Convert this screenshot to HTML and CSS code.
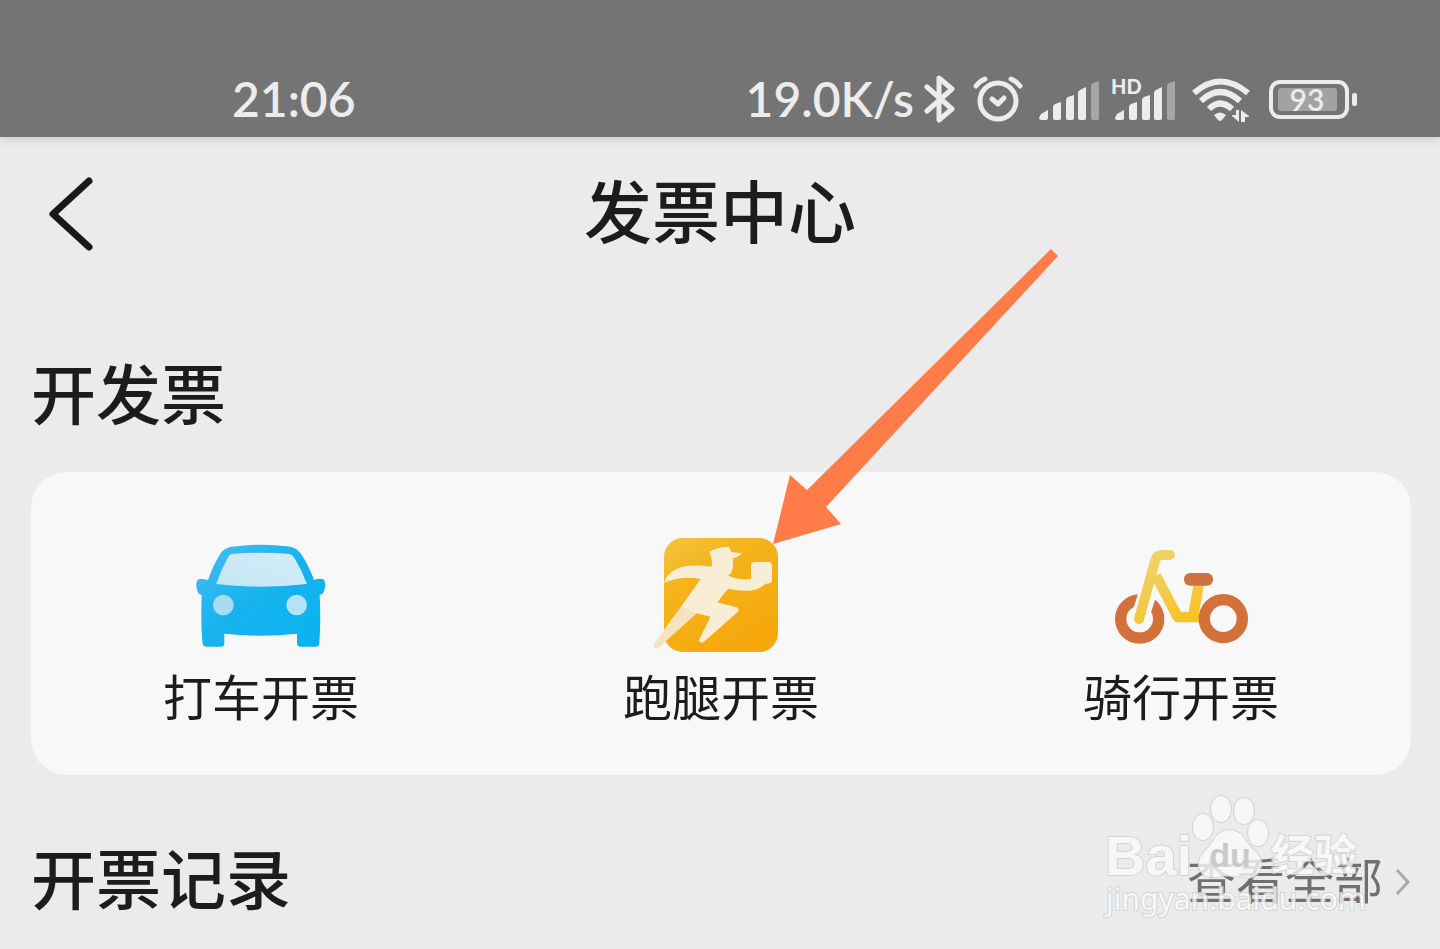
FILE: index.html
```html
<!DOCTYPE html>
<html lang="zh-CN">
<head>
    <meta charset="UTF-8">
    <meta name="viewport" content="width=device-width, initial-scale=1.0">
    <title>发票中心</title>
    <link rel="stylesheet" href="styles.css">
</head>
<body>
    <div class="status-bar">
        <span class="time">21:06</span>
        <div class="status-icons">
            <span class="speed">19.0K/s</span>
            <!-- Bluetooth -->
            <svg width="36" height="48" viewBox="0 0 36 48" fill="none" stroke="#ececec" stroke-width="5" stroke-linecap="round" stroke-linejoin="round">
                <path d="M3 12 L28 34 L15 45 V3 L28 14 L3 36"/>
            </svg>
            <!-- Alarm -->
            <svg width="53" height="48" viewBox="0 0 53 48" fill="none" stroke="#ececec" stroke-width="5" stroke-linecap="round" stroke-linejoin="round">
                <circle cx="25" cy="26" r="18"/>
                <path d="M19 24 L25 29 L31 23"/>
                <path d="M3 11 Q7 6 12 4 M38 4 Q43 6 47 11"/>
            </svg>
            <!-- Signal -->
            <svg width="60" height="48" viewBox="0 0 60 48" fill="#ececec">
                <path d="M2 39 L9 35 V43 Q9 45 7 45 H2 Q0 45 0 43 Z"/>
                <path d="M14 32 Q14 30 16 29 L22 27 V43 Q22 45 20 45 H16 Q14 45 14 43 Z"/>
                <path d="M27 25 Q27 23 29 22 L35 20 V43 Q35 45 33 45 H29 Q27 45 27 43 Z"/>
                <path d="M39 18 Q39 16 41 15 L47 12 V43 Q47 45 45 45 H41 Q39 45 39 43 Z"/>
                <path fill="#a6a6a6" d="M52 11 Q52 9 54 8 L60 6 V43 Q60 45 58 45 H54 Q52 45 52 43 Z"/>
            </svg>
            <!-- HD signal -->
            <svg width="66" height="48" viewBox="0 0 66 48" fill="#ececec">
                <text class="hd" x="-1" y="19">HD</text>
                <path d="M5 39 L12 35 V43 Q12 45 10 45 H5 Q3 45 3 43 Z"/>
                <path d="M17 32 Q17 30 19 29 L25 27 V43 Q25 45 23 45 H19 Q17 45 17 43 Z"/>
                <path d="M30 25 Q30 23 32 22 L38 20 V43 Q38 45 36 45 H32 Q30 45 30 43 Z"/>
                <path d="M42 18 Q42 16 44 15 L50 12 V43 Q50 45 48 45 H44 Q42 45 42 43 Z"/>
                <path fill="#a6a6a6" d="M55 11 Q55 9 57 8 L63 6 V43 Q63 45 61 45 H57 Q55 45 55 43 Z"/>
            </svg>
            <!-- Wi-Fi -->
            <svg width="65" height="48" viewBox="0 0 65 48" fill="none" stroke="#ececec" stroke-width="6">
                <path d="M3 18 Q29 -5 57 18"/>
                <path d="M10 26 Q29 8 49 26"/>
                <path d="M18 34 Q29 23 41 34"/>
                <path fill="#ececec" stroke="none" d="M23 40 Q29 35 35 40 L31 45 Q29 47 27 45 Z"/>
                <path fill="#ececec" stroke="none" d="M45 35 H48 V47 L41 41 V40 H45 Z M50 35 L58 41 V42 H54 V47 H50 Z"/>
            </svg>
            <!-- Battery -->
            <svg width="88" height="48" viewBox="0 0 88 48">
                <rect x="2" y="7" width="76" height="35" rx="9" fill="none" stroke="#ececec" stroke-width="4"/>
                <rect x="9" y="13" width="59" height="23" rx="3" fill="#a2a2a2"/>
                <rect x="83" y="18" width="5" height="13" rx="2" fill="#ececec"/>
                <text class="battery" x="38" y="36" text-anchor="middle">93</text>
            </svg>
        </div>
    </div>

    <header class="header">
        <button class="back" type="button" aria-label="返回">
            <svg width="46" height="76" viewBox="0 0 46 76" fill="none" stroke="#191919" stroke-width="7" stroke-linecap="round" stroke-linejoin="round">
                <path d="M41 5 L5 38 L41 71"/>
            </svg>
        </button>
        <h1>发票中心</h1>
    </header>

    <main class="container">
        <section>
            <h2>开发票</h2>
            <nav class="card">
                <a class="entry" href="#">
                    <span class="icon">
                        <svg width="130" height="114" viewBox="48 24 390 342">
                            <defs>
                                <linearGradient id="carBody" x1="0" y1="0" x2="1" y2="1">
                                    <stop offset="0" stop-color="#49bdf3"/>
                                    <stop offset="0.5" stop-color="#16b2ee"/>
                                    <stop offset="1" stop-color="#08b4f0"/>
                                </linearGradient>
                                <linearGradient id="carGlass" x1="1" y1="0" x2="0" y2="1">
                                    <stop offset="0" stop-color="#d5edf8"/>
                                    <stop offset="1" stop-color="#c4e6f6"/>
                                </linearGradient>
                            </defs>
                            <path fill="url(#carBody)" d="M155 50 Q245 38 332 50 Q350 54 362 70 Q386 106 402 150 L412 147 Q424 144 433 150 Q439 172 430 188 Q426 193 419 195 Q423 270 418 340 Q418 350 408 350 H360 Q351 350 351 340 V311 Q243 323 133 311 V340 Q133 350 124 350 H78 Q69 350 68 340 Q62 300 65 195 Q56 193 53 186 Q46 167 51 152 Q57 145 69 147 L84 150 Q100 103 124 67 Q136 53 155 50 Z"/>
                            <path fill="url(#carGlass)" d="M155 72 Q245 65 328 72 Q338 74 343 84 Q365 119 381 162 Q245 178 108 162 Q124 119 144 82 Q148 74 155 72 Z"/>
                            <circle cx="130" cy="225" r="31" fill="#a9dcf3"/>
                            <circle cx="350" cy="225" r="31" fill="#b4e2f6"/>
                        </svg>
                    </span>
                    <span class="label">打车开票</span>
                </a>
                <a class="entry" href="#">
                    <span class="icon">
                        <svg class="runner" width="114" height="114" viewBox="72 39 342 342">
                            <defs>
                                <linearGradient id="runBg" x1="0" y1="0" x2="0.6" y2="1">
                                    <stop offset="0" stop-color="#f5c343"/>
                                    <stop offset="0.35" stop-color="#f4b51b"/>
                                    <stop offset="1" stop-color="#f6a70c"/>
                                </linearGradient>
                            </defs>
                            <rect x="72" y="39" width="342" height="342" rx="56" fill="url(#runBg)"/>
                            <path fill="#f8edd5" d="M208 80 Q236 65 267 65 L275 82 L304 84 Q300 97 278 100 Q281 122 276 139 Q271 151 262 150 L275 156 Q300 166 333 161 V122 Q333 111 344 111 H386 Q396 111 396 122 V166 Q396 176 382 176 H376 Q358 194 328 197 Q297 199 264 191 L232 232 L290 247 Q300 251 293 261 L191 351 Q183 356 176 347 L211 275 L170 265 L53 370 Q44 372 39 362 Q68 319 114 258 L182 162 Q126 151 73 173 Q78 148 109 132 Q146 116 215 125 Q219 106 208 80 Z"/>
                            <path fill="#f1dcb5" opacity="0.65" d="M124 247 L170 265 L53 370 Q44 372 39 362 Q68 319 124 247 Z"/>
                        </svg>
                        <!-- Pointer to the errand entry -->
                        <svg class="arrow" width="285" height="295" viewBox="0 0 285 295">
                            <path fill="#ff7b47" d="M0 295 L17 226 L34 241 L278 0 L285 7 L53 258 L68 275 Z"/>
                        </svg>
                    </span>
                    <span class="label">跑腿开票</span>
                </a>
                <a class="entry" href="#">
                    <span class="icon">
                        <svg width="133" height="114" viewBox="42 9 399 342" fill="none">
                            <defs>
                                <linearGradient id="frame" gradientUnits="userSpaceOnUse" x1="170" y1="45" x2="270" y2="260">
                                    <stop offset="0" stop-color="#efd369"/>
                                    <stop offset="0.5" stop-color="#f3ca4d"/>
                                    <stop offset="1" stop-color="#f8c21c"/>
                                </linearGradient>
                            </defs>
                            <circle cx="116" cy="252" r="57" stroke="#d4713b" stroke-width="34"/>
                            <path d="M116 250 L160 112" stroke="#f8f8f8" stroke-width="54" stroke-linecap="round"/>
                            <path d="M165 122 L230 246 H295 M276 246 L293 150" stroke="url(#frame)" stroke-width="31" stroke-linejoin="round"/>
                            <path d="M114 252 L161 82 Q166 60 183 60 H207" stroke="url(#frame)" stroke-width="30" stroke-linecap="round" stroke-linejoin="round"/>
                            <rect x="249" y="114" width="87" height="38" rx="18" fill="#d0703e"/>
                            <circle cx="367" cy="251" r="57" fill="#f8f8f8" stroke="#d4713b" stroke-width="34"/>
                        </svg>
                    </span>
                    <span class="label">骑行开票</span>
                </a>
            </nav>
        </section>

        <section class="records">
            <h2>开票记录</h2>
            <a class="view-all" href="#">
                <span class="label">查看全部</span>
                <svg width="16" height="30" viewBox="0 0 16 30" fill="none" stroke="#a9a9a9" stroke-width="3">
                    <path d="M2 4 L13 16 L2 28"/>
                </svg>
            </a>
            <svg class="watermark" width="270" height="130" viewBox="0 0 270 130">
                <g class="mark">
                    <text class="mark-bai" x="2" y="82">Bai</text>
                    <ellipse cx="100" cy="34" rx="10" ry="13"/>
                    <ellipse cx="118" cy="16" rx="10" ry="13"/>
                    <ellipse cx="141" cy="18" rx="10" ry="13"/>
                    <ellipse cx="155" cy="40" rx="10" ry="13"/>
                    <path d="M126 37 Q135 37 141 45 Q145 52 153 59 Q161 68 157 77 Q152 87 141 84 Q126 81 114 84 Q102 86 97 77 Q93 68 101 59 Q108 52 112 45 Q118 37 126 37 Z"/>
                    <text class="mark-cn" x="168" y="78">经验</text>
                    <text class="mark-url" x="3" y="117">jingyan.baidu.com</text>
                </g>
                <text class="mark-du" x="127" y="74" text-anchor="middle">du</text>
            </svg>
        </section>
    </main>
</body>
</html>
```
FILE: styles.css
```css
* {
    box-sizing: border-box;
}
body {
    font-family: "Noto Sans CJK SC", sans-serif;
    margin: 0;
    background-color: #ebebeb;
    color: #1c1c1c;
}
h1, h2 {
    margin: 0;
    padding-bottom: 10px;
    font-weight: 500;
}
a {
    color: inherit;
    text-decoration: none;
}
.status-bar {
    display: flex;
    justify-content: space-between;
    align-items: center;
    padding: 75px 83px 14px 232px;
    background-color: #747474;
    color: #ececec;
    font-family: Lato, sans-serif;
    font-size: 48px;
    font-weight: 600;
    line-height: 48px;
    box-shadow: 0 2px 10px rgba(0, 0, 0, 0.15);
}
.status-icons {
    display: flex;
    align-items: center;
    gap: 13px;
}
.speed {
    margin-right: -3px;
}
.hd {
    font-size: 20px;
    font-weight: 900;
}
.battery {
    fill: #ececec;
    font-size: 30px;
    font-weight: 600;
}
.header {
    display: grid;
    grid-template-columns: 1fr auto 1fr;
    align-items: center;
    padding: 39px 48px 0;
}
.header h1 {
    font-size: 68px;
    line-height: 66px;
}
.back {
    justify-self: start;
    padding: 0;
    border: none;
    background: none;
    cursor: pointer;
}
.back svg {
    display: block;
}
.container {
    padding: 104px 29px 28px 31px;
}
h2 {
    font-size: 65px;
    line-height: 70px;
}
.card {
    display: grid;
    grid-template-columns: repeat(3, 1fr);
    margin-top: 36px;
    padding: 66px 0 41px;
    border-radius: 36px;
    background-color: #f8f8f8;
}
.entry {
    display: flex;
    flex-direction: column;
    align-items: center;
    gap: 10px;
}
.icon {
    position: relative;
    display: flex;
}
.runner {
    overflow: visible;
}
/* Tip sits on the corner of the icon */
.arrow {
    position: absolute;
    left: 109px;
    bottom: 108px;
    pointer-events: none;
}
.label {
    padding-bottom: 6px;
    font-size: 49px;
    line-height: 66px;
}
.records {
    position: relative;
    display: flex;
    justify-content: space-between;
    align-items: center;
    margin-top: 66px;
}
.view-all {
    display: flex;
    align-items: center;
    gap: 12px;
    color: #707070;
}
.watermark {
    position: absolute;
    right: 38px;
    top: -48px;
    pointer-events: none;
}
.mark {
    fill: #fafafa;
    stroke: #cfcfcf;
    stroke-width: 2px;
    paint-order: stroke;
    opacity: 0.8;
}
.mark-bai {
    font-family: "Liberation Sans", sans-serif;
    font-size: 56px;
    font-weight: 700;
}
.mark-cn {
    font-size: 43px;
    font-weight: 700;
}
.mark-url {
    font-family: "Noto Sans", sans-serif;
    font-size: 30px;
}
.mark-du {
    fill: #c9c9c9;
    font-family: "Liberation Sans", sans-serif;
    font-size: 34px;
    font-weight: 700;
}
```
